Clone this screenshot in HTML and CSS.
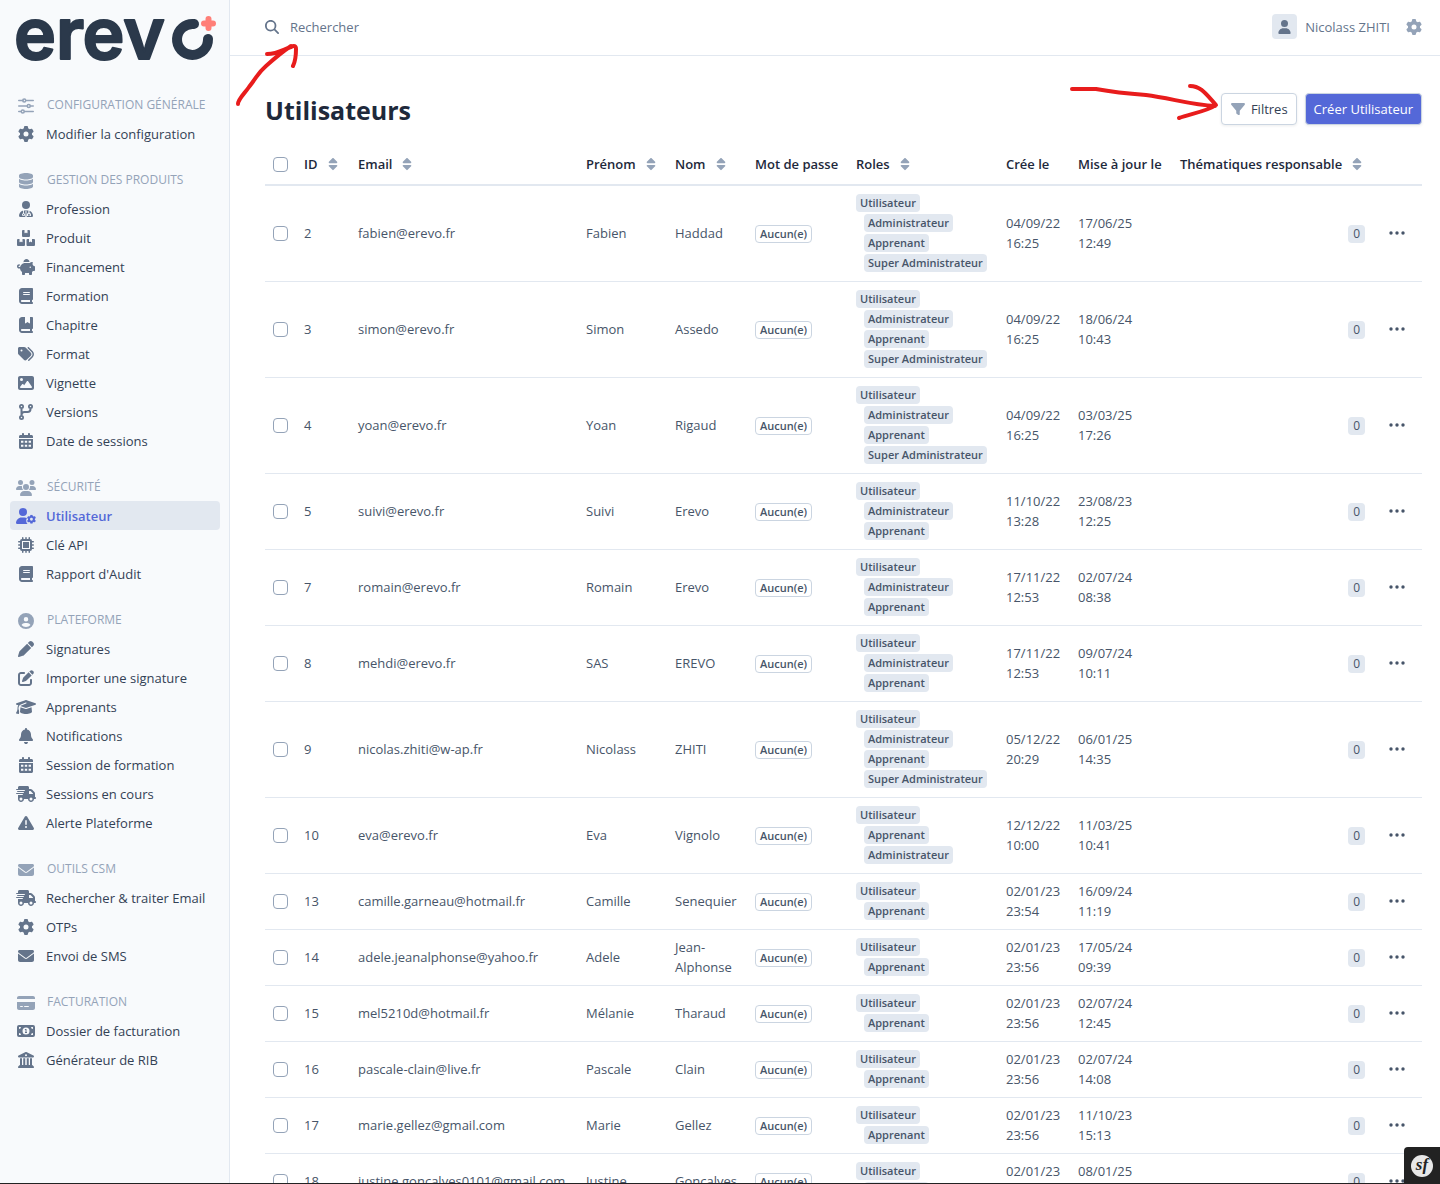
FILE: index.html
```html
<!DOCTYPE html>
<html lang="fr">
<head>
    <meta charset="UTF-8">
    <meta name="viewport" content="width=device-width, initial-scale=1.0">
    <title>Utilisateurs</title>
    <link rel="stylesheet" href="styles.css">
</head>
<body>
    <svg class="sprite" aria-hidden="true">
        <symbol id="sliders" viewBox="0 0 512 512"><g fill="none" stroke="currentColor" stroke-width="48" stroke-linecap="round"><path d="M24 80h136M272 80h216M24 256h264M400 256h88M24 432h72M208 432h280"/><circle cx="200" cy="80" r="48"/><circle cx="344" cy="256" r="48"/><circle cx="152" cy="432" r="48"/></g></symbol>
        <symbol id="gear" viewBox="0 0 512 512"><path d="M495.9 166.6c3.2 8.7 .5 18.4-6.4 24.6l-43.3 39.4c1.1 8.3 1.7 16.8 1.7 25.4s-.6 17.1-1.7 25.4l43.3 39.4c6.9 6.2 9.6 15.9 6.4 24.6c-4.4 11.9-9.7 23.3-15.8 34.3l-4.7 8.1c-6.6 11-14 21.4-22.1 31.2c-5.9 7.2-15.7 9.6-24.5 6.8l-55.7-17.7c-13.4 10.3-28.2 18.9-44 25.4l-12.5 57.1c-2 9.1-9 16.3-18.2 17.8c-13.8 2.3-28 3.5-42.5 3.5s-28.7-1.2-42.5-3.5c-9.2-1.5-16.2-8.7-18.2-17.8l-12.5-57.1c-15.8-6.5-30.6-15.1-44-25.4L83.1 425.9c-8.8 2.8-18.6 .3-24.5-6.8c-8.1-9.8-15.5-20.2-22.1-31.2l-4.7-8.1c-6.1-11-11.4-22.4-15.8-34.3c-3.2-8.7-.5-18.4 6.4-24.6l43.3-39.4C64.6 273.1 64 264.6 64 256s.6-17.1 1.7-25.4L22.4 191.2c-6.9-6.2-9.6-15.9-6.4-24.6c4.4-11.9 9.7-23.3 15.8-34.3l4.7-8.1c6.6-11 14-21.4 22.1-31.2c5.9-7.2 15.7-9.6 24.5-6.8l55.7 17.7c13.4-10.3 28.2-18.9 44-25.4l12.5-57.1c2-9.1 9-16.3 18.2-17.8C227.3 1.2 241.5 0 256 0s28.7 1.2 42.5 3.5c9.2 1.5 16.2 8.7 18.2 17.8l12.5 57.1c15.8 6.5 30.6 15.1 44 25.4l55.7-17.7c8.8-2.8 18.6-.3 24.5 6.8c8.1 9.8 15.5 20.2 22.1 31.2l4.7 8.1c6.1 11 11.4 22.4 15.8 34.3zM256 336a80 80 0 1 0 0-160 80 80 0 1 0 0 160z"/></symbol>
        <symbol id="database" viewBox="0 0 448 512"><path d="M448 80v48c0 44.2-100.3 80-224 80S0 172.2 0 128V80C0 35.8 100.3 0 224 0S448 35.8 448 80zM393.2 214.7c20.8-7.4 39.9-16.9 54.8-28.6V288c0 44.2-100.3 80-224 80S0 332.2 0 288V186.1c14.9 11.8 34 21.2 54.8 28.6C99.7 230.7 159.5 240 224 240s124.3-9.3 169.2-25.3zM0 346.1c14.9 11.8 34 21.2 54.8 28.6C99.7 390.7 159.5 400 224 400s124.3-9.3 169.2-25.3c20.8-7.4 39.9-16.9 54.8-28.6V432c0 44.2-100.3 80-224 80S0 476.2 0 432V346.1z"/></symbol>
        <symbol id="doctor" viewBox="0 0 448 512"><circle cx="224" cy="128" r="128"/><path fill-rule="evenodd" d="M112 312c-66 24-112 90-112 170c0 16 13 30 30 30H418c16 0 30-14 30-30c0-80-46-146-112-170v62c26 8 46 34 46 62v44h-48v-28h10v-16c0-22-10-32-26-32s-26 10-26 32v16h10v28h-48v-44c0-28 18-54 46-62v-70H160v86c20 6 34 24 34 46c0 26-22 46-48 46s-48-20-48-46c0-22 14-40 34-46v-78zM146 416a20 20 0 1 0 0 40 20 20 0 1 0 0-40zM200 330h48l-12 60 12 122h-48l12-122z"/></symbol>
        <symbol id="boxes" viewBox="0 0 576 512"><path d="M160 32a32 32 0 0 1 32-32h48v90c0 12 10 16 18 10l30-20 30 20c8 6 18 2 18-10V0h48a32 32 0 0 1 32 32v160a32 32 0 0 1-32 32H192a32 32 0 0 1-32-32zM0 320a32 32 0 0 1 32-32h48v90c0 12 10 16 18 10l30-20 30 20c8 6 18 2 18-10v-90h48a32 32 0 0 1 32 32v160a32 32 0 0 1-32 32H32a32 32 0 0 1-32-32zM304 320a32 32 0 0 1 32-32h48v90c0 12 10 16 18 10l30-20 30 20c8 6 18 2 18-10v-90h64a32 32 0 0 1 32 32v160a32 32 0 0 1-32 32H336a32 32 0 0 1-32-32z"/></symbol>
        <symbol id="piggy" viewBox="0 0 576 512"><path d="M400 96l0 .7c-5.3-.4-10.6-.7-16-.7H256c-16.5 0-32.5 2.1-47.8 6c-.1-2-.2-4-.2-6c0-53 43-96 96-96s96 43 96 96zm-16 32c3.5 0 7 .1 10.4 .3c4.2 .3 8.4 .7 12.6 1.3C424.6 109.1 450.8 96 480 96h11.5c10.4 0 18 9.8 15.5 19.9l-13.8 55.2c15.8 14.8 28.7 32.8 37.5 52.9H544c17.7 0 32 14.3 32 32v96c0 17.7-14.3 32-32 32H512c-9.1 12.1-19.9 22.9-32 32v64c0 17.7-14.3 32-32 32H416c-17.7 0-32-14.3-32-32V448H256v32c0 17.7-14.3 32-32 32H192c-17.7 0-32-14.3-32-32V416c-34.9-26.2-58.7-66.3-63.2-112H68c-37.6 0-68-30.4-68-68s30.4-68 68-68h4c13.3 0 24 10.7 24 24s-10.7 24-24 24H68c-11 0-20 9-20 20s9 20 20 20H99.2c12.1-59.8 57.7-107.5 116.3-122.8c12.9-3.4 26.5-5.2 40.5-5.2H384zm64 136a24 24 0 1 0 -48 0 24 24 0 1 0 48 0z"/></symbol>
        <symbol id="book" viewBox="0 0 448 512"><path d="M96 0C43 0 0 43 0 96V416c0 53 43 96 96 96H384h32c17.7 0 32-14.3 32-32s-14.3-32-32-32V384c17.7 0 32-14.3 32-32V32c0-17.7-14.3-32-32-32H384 96zm0 384H352v64H96c-17.7 0-32-14.3-32-32s14.3-32 32-32zm32-240c0-8.8 7.2-16 16-16H336c8.8 0 16 7.2 16 16s-7.2 16-16 16H144c-8.8 0-16-7.2-16-16zm16 48H336c8.8 0 16 7.2 16 16s-7.2 16-16 16H144c-8.8 0-16-7.2-16-16s7.2-16 16-16z"/></symbol>
        <symbol id="bookmark" viewBox="0 0 448 512"><path d="M0 96C0 43 43 0 96 0h96V190.7c0 13.4 15.5 20.9 26 12.5L272 160l54 43.2c10.5 8.4 26 .9 26-12.5V0h32 32c17.7 0 32 14.3 32 32V352c0 17.7-14.3 32-32 32v64c17.7 0 32 14.3 32 32s-14.3 32-32 32H384 96c-53 0-96-43-96-96V96zM64 416c0 17.7 14.3 32 32 32H352V384H96c-17.7 0-32 14.3-32 32z"/></symbol>
        <symbol id="tags" viewBox="0 0 512 512"><path d="M345 39.1L472.8 168.4c52.4 53 52.4 138.2 0 191.2L360.8 472.9c-9.3 9.4-24.5 9.5-33.9 .2s-9.5-24.5-.2-33.9L438.6 325.9c33.9-34.3 33.9-89.4 0-123.7L310.9 72.9c-9.3-9.4-9.2-24.6 .2-33.9s24.6-9.2 33.9 .2zM0 229.5V80C0 53.5 21.5 32 48 32H197.5c17 0 33.3 6.7 45.3 18.7l168 168c25 25 25 65.5 0 90.5L277.3 442.7c-25 25-65.5 25-90.5 0l-168-168C6.7 262.7 0 246.5 0 229.5zM144 144a32 32 0 1 0 -64 0 32 32 0 1 0 64 0z"/></symbol>
        <symbol id="image" viewBox="0 0 512 512"><path d="M0 96C0 60.7 28.7 32 64 32H448c35.3 0 64 28.7 64 64V416c0 35.3-28.7 64-64 64H64c-35.3 0-64-28.7-64-64V96zM323.8 202.5c-4.5-6.6-11.9-10.5-19.8-10.5s-15.4 3.9-19.8 10.5l-87 127.6L170.7 297c-4.6-5.7-11.5-9-18.7-9s-14.2 3.3-18.7 9l-64 80c-5.8 7.2-6.9 17.1-2.9 25.4s12.4 13.6 21.6 13.6h96 32H424c8.9 0 17.1-4.9 21.2-12.8s3.6-17.4-1.4-24.7l-120-176zM112 192a48 48 0 1 0 0-96 48 48 0 1 0 0 96z"/></symbol>
        <symbol id="branch" viewBox="0 0 448 512"><g fill="none" stroke="currentColor"><g stroke-width="56"><circle cx="80" cy="80" r="52"/><circle cx="368" cy="80" r="52"/><circle cx="80" cy="432" r="52"/></g><path stroke-width="64" d="M80 150v212M368 150v10c0 53-43 96-96 96H176c-53 0-96 43-96 96"/></g></symbol>
        <symbol id="calendar" viewBox="0 0 448 512"><path fill-rule="evenodd" d="M128 0c17.7 0 32 14.3 32 32V64H288V32c0-17.7 14.3-32 32-32s32 14.3 32 32V64h48c26.5 0 48 21.5 48 48v48H0V112C0 85.5 21.5 64 48 64H96V32c0-17.7 14.3-32 32-32zM0 192H448V464c0 26.5-21.5 48-48 48H48c-26.5 0-48-21.5-48-48V192zM64 248v60h76v-60zM186 248v60h76v-60zM308 248v60h76v-60zM64 376v60h76v-60zM186 376v60h76v-60zM308 376v60h76v-60z"/></symbol>
        <symbol id="users" viewBox="0 0 640 512"><path d="M144 0a80 80 0 1 1 0 160A80 80 0 1 1 144 0zM512 0a80 80 0 1 1 0 160A80 80 0 1 1 512 0zM0 298.7C0 239.8 47.8 192 106.7 192h42.7c15.9 0 31 3.5 44.6 9.7c-1.3 7.2-1.9 14.7-1.9 22.3c0 38.2 16.8 72.5 43.3 96c-.2 0-.4 0-.7 0H21.3C9.6 320 0 310.4 0 298.7zM405.3 320c-.2 0-.4 0-.7 0c26.6-23.5 43.3-57.8 43.3-96c0-7.6-.7-15-1.9-22.3c13.6-6.3 28.7-9.7 44.6-9.7h42.7C592.2 192 640 239.8 640 298.7c0 11.8-9.6 21.3-21.3 21.3H405.3zM224 224a96 96 0 1 1 192 0 96 96 0 1 1 -192 0zM128 485.3C128 411.7 187.7 352 261.3 352H378.7C452.3 352 512 411.7 512 485.3c0 14.7-11.9 26.7-26.7 26.7H154.7c-14.7 0-26.7-11.9-26.7-26.7z"/></symbol>
        <symbol id="usergear" viewBox="0 0 640 512"><path d="M224 256A128 128 0 1 0 224 0a128 128 0 1 0 0 256zm-45.7 48C79.8 304 0 383.8 0 482.3C0 498.7 13.3 512 29.7 512H370c-50-50-56-134-20-192c-24-10-52-16-80-16H178.3z"/><svg x="348" y="210" width="292" height="302" viewBox="0 0 512 512"><use href="#gear"/></svg></symbol>
        <symbol id="chip" viewBox="0 0 512 512"><path fill="none" stroke="currentColor" stroke-width="48" stroke-linecap="round" d="M152 24v60M256 24v60M360 24v60M152 488v-60M256 488v-60M360 488v-60M24 152h60M24 256h60M24 360h60M488 152h-60M488 256h-60M488 360h-60"/><path fill-rule="evenodd" d="M128 64h256a64 64 0 0 1 64 64v256a64 64 0 0 1-64 64H128a64 64 0 0 1-64-64V128a64 64 0 0 1 64-64zM128 128v256h256V128zM160 160h192v192H160z"/></symbol>
        <symbol id="circleuser" viewBox="0 0 512 512"><path d="M399 384.2C376.9 345.8 335.4 320 288 320H224c-47.4 0-88.9 25.8-111 64.2c35.2 39.2 86.2 63.8 143 63.8s107.8-24.7 143-63.8zM0 256a256 256 0 1 1 512 0A256 256 0 1 1 0 256zm256 16a72 72 0 1 0 0-144 72 72 0 1 0 0 144z"/></symbol>
        <symbol id="pen" viewBox="0 0 512 512"><path d="M362.7 19.3L314.3 67.7 444.3 197.7l48.4-48.4c25-25 25-65.5 0-90.5L453.3 19.3c-25-25-65.5-25-90.5 0zm-71 71L58.6 323.5c-10.4 10.4-18 23.3-22.2 37.4L1 481.2C-1.5 489.7 .8 498.8 7 505s15.3 8.5 23.7 6.1l120.3-35.4c14.1-4.2 27-11.8 37.4-22.2L421.7 220.3 291.7 90.3z"/></symbol>
        <symbol id="edit" viewBox="0 0 512 512"><path d="M471.6 21.7c-21.9-21.9-57.3-21.9-79.2 0L362.3 51.7l97.9 97.9 30.1-30.1c21.9-21.9 21.9-57.3 0-79.2L471.6 21.7zm-299.2 220c-6.1 6.1-10.8 13.6-13.5 21.9l-29.6 88.8c-2.9 8.6-.6 18.1 5.8 24.6s15.9 8.7 24.6 5.8l88.8-29.6c8.2-2.7 15.7-7.4 21.9-13.5L437.7 172.3 339.7 74.3 172.4 241.7zM96 64C43 64 0 107 0 160V416c0 53 43 96 96 96H352c53 0 96-43 96-96V320c0-17.7-14.3-32-32-32s-32 14.3-32 32v96c0 17.7-14.3 32-32 32H96c-17.7 0-32-14.3-32-32V160c0-17.7 14.3-32 32-32h96c17.7 0 32-14.3 32-32s-14.3-32-32-32H96z"/></symbol>
        <symbol id="cap" viewBox="0 0 640 512"><path d="M320 32c-8.1 0-16.1 1.4-23.7 4.1L15.8 137.4C6.3 140.9 0 149.9 0 160s6.3 19.1 15.8 22.6l57.9 20.9C57.3 229.3 48 259.8 48 291.9v28.1c0 28.4-10.8 57.7-22.3 80.8c-6.5 13-13.9 25.8-22.5 37.6C0 442.7-.9 448.3 .9 453.4s6 8.9 11.2 10.2l64 16c4.2 1.1 8.7 .3 12.4-2s6.3-6.1 7.1-10.4c8.6-42.8 4.3-81.2-2.1-108.7C90.3 344.3 86 329.8 80 316.5V291.9c0-30.2 10.2-58.7 27.9-81.5c12.9-15.5 29.6-28 49.2-35.7l157-61.7c8.2-3.2 17.5 .8 20.7 9s-.8 17.5-9 20.7l-157 61.7c-12.4 4.9-23.3 12.4-32.2 21.6l159.6 57.6c7.6 2.7 15.6 4.1 23.7 4.1s16.1-1.4 23.7-4.1L624.2 182.6c9.5-3.4 15.8-12.5 15.8-22.6s-6.3-19.1-15.8-22.6L343.7 36.1C336.1 33.4 328.1 32 320 32zM128 408c0 35.3 86 72 192 72s192-36.7 192-72L496.7 262.6 354.5 314c-11.1 4-22.8 6-34.5 6s-23.5-2-34.5-6L143.3 262.6 128 408z"/></symbol>
        <symbol id="bell" viewBox="0 0 448 512"><path d="M224 0c-17.7 0-32 14.3-32 32V51.2C119 66 64 130.6 64 208v18.8c0 47-17.3 92.4-48.5 127.6l-7.4 8.3c-8.4 9.4-10.4 22.9-5.3 34.4S19.4 416 32 416H416c12.6 0 24-7.4 29.2-18.9s3.1-25-5.3-34.4l-7.4-8.3C401.3 319.2 384 273.9 384 226.8V208c0-77.4-55-142-128-156.8V32c0-17.7-14.3-32-32-32zm45.3 493.3c12-12 18.7-28.3 18.7-45.3H224 160c0 17 6.7 33.3 18.7 45.3s28.3 18.7 45.3 18.7s33.3-6.7 45.3-18.7z"/></symbol>
        <symbol id="truck" viewBox="0 0 640 512"><path d="M112 0C85.5 0 64 21.5 64 48V96H16c-8.8 0-16 7.2-16 16s7.2 16 16 16H64 272c8.8 0 16 7.2 16 16s-7.2 16-16 16H64 48c-8.8 0-16 7.2-16 16s7.2 16 16 16H64 240c8.8 0 16 7.2 16 16s-7.2 16-16 16H64 16c-8.8 0-16 7.2-16 16s7.2 16 16 16H64 208c8.8 0 16 7.2 16 16s-7.2 16-16 16H64V416c0 53 43 96 96 96s96-43 96-96H384c0 53 43 96 96 96s96-43 96-96h32c17.7 0 32-14.3 32-32s-14.3-32-32-32V288 256 237.3c0-17-6.7-33.3-18.7-45.3L512 114.7c-12-12-28.3-18.7-45.3-18.7H416V48c0-26.5-21.5-48-48-48H112zM544 237.3V256H416V160h50.7L544 237.3zM160 368a48 48 0 1 1 0 96 48 48 0 1 1 0-96zm272 48a48 48 0 1 1 96 0 48 48 0 1 1 -96 0z"/></symbol>
        <symbol id="warning" viewBox="0 0 512 512"><path d="M256 32c14.2 0 27.3 7.5 34.5 19.8l216 368c7.3 12.4 7.3 27.7 .2 40.1S486.3 480 472 480H40c-14.3 0-27.6-7.7-34.7-20.1s-7-27.8 .2-40.1l216-368C228.7 39.5 241.8 32 256 32zm0 128c-13.3 0-24 10.7-24 24V296c0 13.3 10.7 24 24 24s24-10.7 24-24V184c0-13.3-10.7-24-24-24zm32 224a32 32 0 1 0 -64 0 32 32 0 1 0 64 0z"/></symbol>
        <symbol id="envelope" viewBox="0 0 512 512"><path d="M48 64C21.5 64 0 85.5 0 112c0 15.1 7.1 29.3 19.2 38.4L236.8 313.6c11.4 8.5 27 8.5 38.4 0L492.8 150.4c12.1-9.1 19.2-23.3 19.2-38.4c0-26.5-21.5-48-48-48H48zM0 176V384c0 35.3 28.7 64 64 64H448c35.3 0 64-28.7 64-64V176L294.4 339.2c-22.8 17.1-54 17.1-76.8 0L0 176z"/></symbol>
        <symbol id="card" viewBox="0 0 576 512"><path d="M64 32C28.7 32 0 60.7 0 96v32H576V96c0-35.3-28.7-64-64-64H64zM576 224H0V416c0 35.3 28.7 64 64 64H512c35.3 0 64-28.7 64-64V224zM112 352h64c8.8 0 16 7.2 16 16s-7.2 16-16 16H112c-8.8 0-16-7.2-16-16s7.2-16 16-16zm112 16c0-8.8 7.2-16 16-16H368c8.8 0 16 7.2 16 16s-7.2 16-16 16H240c-8.8 0-16-7.2-16-16z"/></symbol>
        <symbol id="money" viewBox="0 0 576 512"><path fill-rule="evenodd" d="M64 64h448a64 64 0 0 1 64 64v256a64 64 0 0 1-64 64H64a64 64 0 0 1-64-64V128a64 64 0 0 1 64-64zM64 128v64a64 64 0 0 0 64-64zM448 128a64 64 0 0 0 64 64v-64zM64 320v64h64a64 64 0 0 0-64-64zM512 320a64 64 0 0 0-64 64h64zM288 144a112 112 0 1 0 0 224 112 112 0 1 0 0-224zM252 192h52v96h16v32h-64v-32h16v-64h-20z"/></symbol>
        <symbol id="bank" viewBox="0 0 512 512"><path fill-rule="evenodd" d="M244 3c8-4 17-4 25 0l224 112c14 7 21 20 18 34s-16 27-31 27H32c-15 0-28-12-31-27s4-29 18-34zM256 72a32 32 0 1 0 0 64 32 32 0 1 0 0-64zM64 200h64v216h40V200h64v216h48V200h64v216h40V200h64v216c22 14 34 24 50 38c14 12 16 26 12 38s-17 20-30 20H32c-13 0-26-8-30-20s-2-26 12-38c16-14 28-24 50-38z"/></symbol>
        <symbol id="search" viewBox="0 0 512 512"><path d="M416 208c0 45.9-14.9 88.3-40 122.7L502.6 457.4c12.5 12.5 12.5 32.8 0 45.3s-32.8 12.5-45.3 0L330.7 376c-34.4 25.2-76.8 40-122.7 40C93.1 416 0 322.9 0 208S93.1 0 208 0S416 93.1 416 208zM208 352a144 144 0 1 0 0-288 144 144 0 1 0 0 288z"/></symbol>
        <symbol id="user" viewBox="0 0 448 512"><path d="M224 256A128 128 0 1 0 224 0a128 128 0 1 0 0 256zm-45.7 48C79.8 304 0 383.8 0 482.3C0 498.7 13.3 512 29.7 512H418.3c16.4 0 29.7-13.3 29.7-29.7C448 383.8 368.2 304 269.7 304H178.3z"/></symbol>
        <symbol id="filter" viewBox="0 0 512 512"><path d="M3.9 54.9C10.5 40.9 24.5 32 40 32H472c15.5 0 29.5 8.9 36.1 22.9s4.6 30.5-5.2 42.5L320 320.9V448c0 12.1-6.8 23.2-17.7 28.6s-23.8 4.3-33.5-3l-64-48c-8.1-6-12.8-15.5-12.8-25.6V320.9L9 97.3C-.7 85.4-2.8 68.8 3.9 54.9z"/></symbol>
        <symbol id="sort" viewBox="0 0 320 512"><path d="M137.4 41.4c12.5-12.5 32.8-12.5 45.3 0l128 128c9.2 9.2 11.9 22.9 6.9 34.9s-16.6 19.8-29.6 19.8H32c-12.9 0-24.6-7.8-29.6-19.8s-2.2-25.7 6.9-34.9l128-128zm0 429.3l-128-128c-9.2-9.2-11.9-22.9-6.9-34.9s16.6-19.8 29.6-19.8H288c12.9 0 24.6 7.8 29.6 19.8s2.2 25.7-6.9 34.9l-128 128c-12.5 12.5-32.8 12.5-45.3 0z"/></symbol>
        <symbol id="dots" viewBox="0 0 16 16"><circle cx="2" cy="8" r="1.700"/><circle cx="8" cy="8" r="1.700"/><circle cx="14" cy="8" r="1.700"/></symbol>
    </svg>

    <div class="layout">
        <aside class="sidebar">
            <a href="#" class="logo" aria-label="erevo">
                <svg width="200" height="46" viewBox="0 0 200 46">
                    <text class="logo-text" x="-2" y="44">erev</text>
                    <path class="logo-ring" d="M178 9A15.500 15.500 0 1 0 192 24"/>
                    <path class="logo-plus" d="M192.500 4v9M188 8.500h9"/>
                </svg>
            </a>
            <nav class="menu">
                <h2 class="menu-title"><svg class="icon"><use href="#sliders"/></svg><span>Configuration générale</span></h2>
                <ul>
                    <li><a href="#"><svg class="icon"><use href="#gear"/></svg>Modifier la configuration</a></li>
                </ul>
                <h2 class="menu-title"><svg class="icon"><use href="#database"/></svg><span>Gestion des produits</span></h2>
                <ul>
                    <li><a href="#"><svg class="icon"><use href="#doctor"/></svg>Profession</a></li>
                    <li><a href="#"><svg class="icon"><use href="#boxes"/></svg>Produit</a></li>
                    <li><a href="#"><svg class="icon"><use href="#piggy"/></svg>Financement</a></li>
                    <li><a href="#"><svg class="icon"><use href="#book"/></svg>Formation</a></li>
                    <li><a href="#"><svg class="icon"><use href="#bookmark"/></svg>Chapitre</a></li>
                    <li><a href="#"><svg class="icon"><use href="#tags"/></svg>Format</a></li>
                    <li><a href="#"><svg class="icon"><use href="#image"/></svg>Vignette</a></li>
                    <li><a href="#"><svg class="icon"><use href="#branch"/></svg>Versions</a></li>
                    <li><a href="#"><svg class="icon"><use href="#calendar"/></svg>Date de sessions</a></li>
                </ul>
                <h2 class="menu-title"><svg class="icon"><use href="#users"/></svg><span>Sécurité</span></h2>
                <ul>
                    <li><a href="#" class="active"><svg class="icon"><use href="#usergear"/></svg>Utilisateur</a></li>
                    <li><a href="#"><svg class="icon"><use href="#chip"/></svg>Clé API</a></li>
                    <li><a href="#"><svg class="icon"><use href="#book"/></svg>Rapport d'Audit</a></li>
                </ul>
                <h2 class="menu-title"><svg class="icon"><use href="#circleuser"/></svg><span>Plateforme</span></h2>
                <ul>
                    <li><a href="#"><svg class="icon"><use href="#pen"/></svg>Signatures</a></li>
                    <li><a href="#"><svg class="icon"><use href="#edit"/></svg>Importer une signature</a></li>
                    <li><a href="#"><svg class="icon"><use href="#cap"/></svg>Apprenants</a></li>
                    <li><a href="#"><svg class="icon"><use href="#bell"/></svg>Notifications</a></li>
                    <li><a href="#"><svg class="icon"><use href="#calendar"/></svg>Session de formation</a></li>
                    <li><a href="#"><svg class="icon"><use href="#truck"/></svg>Sessions en cours</a></li>
                    <li><a href="#"><svg class="icon"><use href="#warning"/></svg>Alerte Plateforme</a></li>
                </ul>
                <h2 class="menu-title"><svg class="icon"><use href="#envelope"/></svg><span>Outils CSM</span></h2>
                <ul>
                    <li><a href="#"><svg class="icon"><use href="#truck"/></svg>Rechercher &amp; traiter Email</a></li>
                    <li><a href="#"><svg class="icon"><use href="#gear"/></svg>OTPs</a></li>
                    <li><a href="#"><svg class="icon"><use href="#envelope"/></svg>Envoi de SMS</a></li>
                </ul>
                <h2 class="menu-title"><svg class="icon"><use href="#card"/></svg><span>Facturation</span></h2>
                <ul>
                    <li><a href="#"><svg class="icon"><use href="#money"/></svg>Dossier de facturation</a></li>
                    <li><a href="#"><svg class="icon"><use href="#bank"/></svg>Générateur de RIB</a></li>
                </ul>
            </nav>
        </aside>

        <div class="content">
            <header class="topbar">
                <form class="search">
                    <label for="query"><svg class="search-icon"><use href="#search"/></svg></label>
                    <input type="search" id="query" placeholder="Rechercher" aria-label="Rechercher">
                </form>
                <div class="account">
                    <span class="avatar"><svg><use href="#user"/></svg></span>
                    <span class="account-name">Nicolass ZHITI</span>
                    <button type="button" class="settings" aria-label="Paramètres"><svg class="icon"><use href="#gear"/></svg></button>
                </div>
                <svg class="arrow arrow-search" width="70" height="70" viewBox="0 0 70 70"><path d="M8 64C8 59 15 53 19 47C29 34 28 33 36 26C46 17 52 12 61 6M37 14C48 14 54 9 61 7C64 5 66 6 66 9C66 15 66 20 63 26"/></svg>
            </header>

            <main class="main">
                <div class="page-head">
                    <h1>Utilisateurs</h1>
                    <div class="actions">
                        <button type="button" class="btn"><svg class="filter-icon"><use href="#filter"/></svg>Filtres</button>
                        <button type="button" class="btn btn-primary">Créer Utilisateur</button>
                        <svg class="arrow arrow-filter" width="156" height="44" viewBox="0 0 156 44"><path d="M6 9H30C46 12 66 14 80 15C104 18 126 25 149 26M124 6C135 6 140 14 150 25C142 31 124 34 113 38"/></svg>
                    </div>
                </div>

                <table class="users">
                    <colgroup>
                        <col class="col-check"><col class="col-id"><col class="col-email"><col class="col-first"><col class="col-last"><col class="col-pass"><col class="col-roles"><col class="col-created"><col class="col-updated"><col class="col-themes"><col class="col-actions">
                    </colgroup>
                    <thead>
                        <tr>
                            <th><input type="checkbox" aria-label="Tout sélectionner"></th>
                            <th><a href="#">ID<svg><use href="#sort"/></svg></a></th>
                            <th><a href="#">Email<svg><use href="#sort"/></svg></a></th>
                            <th><a href="#">Prénom<svg><use href="#sort"/></svg></a></th>
                            <th><a href="#">Nom<svg><use href="#sort"/></svg></a></th>
                            <th>Mot de passe</th>
                            <th><a href="#">Roles<svg><use href="#sort"/></svg></a></th>
                            <th>Crée le</th>
                            <th>Mise à jour le</th>
                            <th><a href="#">Thématiques responsable<svg><use href="#sort"/></svg></a></th>
                            <th></th>
                        </tr>
                    </thead>
                    <tbody id="rows"></tbody>
                </table>
            </main>
        </div>
    </div>

    <div class="toolbar"><button type="button" class="toolbar-btn"><span>sf</span></button></div>

    <script>
        const U = 'Utilisateur', A = 'Administrateur', P = 'Apprenant', S = 'Super Administrateur';

        const users = [
            [2, 'fabien@erevo.fr', 'Fabien', 'Haddad', [U, A, P, S], '04/09/22 16:25', '17/06/25 12:49'],
            [3, 'simon@erevo.fr', 'Simon', 'Assedo', [U, A, P, S], '04/09/22 16:25', '18/06/24 10:43'],
            [4, 'yoan@erevo.fr', 'Yoan', 'Rigaud', [U, A, P, S], '04/09/22 16:25', '03/03/25 17:26'],
            [5, 'suivi@erevo.fr', 'Suivi', 'Erevo', [U, A, P], '11/10/22 13:28', '23/08/23 12:25'],
            [7, 'romain@erevo.fr', 'Romain', 'Erevo', [U, A, P], '17/11/22 12:53', '02/07/24 08:38'],
            [8, 'mehdi@erevo.fr', 'SAS', 'EREVO', [U, A, P], '17/11/22 12:53', '09/07/24 10:11'],
            [9, 'nicolas.zhiti@w-ap.fr', 'Nicolass', 'ZHITI', [U, A, P, S], '05/12/22 20:29', '06/01/25 14:35'],
            [10, 'eva@erevo.fr', 'Eva', 'Vignolo', [U, P, A], '12/12/22 10:00', '11/03/25 10:41'],
            [13, 'camille.garneau@hotmail.fr', 'Camille', 'Senequier', [U, P], '02/01/23 23:54', '16/09/24 11:19'],
            [14, 'adele.jeanalphonse@yahoo.fr', 'Adele', 'Jean-Alphonse', [U, P], '02/01/23 23:56', '17/05/24 09:39'],
            [15, 'mel5210d@hotmail.fr', 'Mélanie', 'Tharaud', [U, P], '02/01/23 23:56', '02/07/24 12:45'],
            [16, 'pascale-clain@live.fr', 'Pascale', 'Clain', [U, P], '02/01/23 23:56', '02/07/24 14:08'],
            [17, 'marie.gellez@gmail.com', 'Marie', 'Gellez', [U, P], '02/01/23 23:56', '11/10/23 15:13'],
            [18, 'justine.goncalves0101@gmail.com', 'Justine', 'Goncalves', [U, P], '02/01/23 23:56', '08/01/25 10:22']
        ];

        document.getElementById('rows').innerHTML = users.map(([id, email, first, last, roles, created, updated]) => `
            <tr>
                <td><input type="checkbox" aria-label="Sélectionner ${id}"></td>
                <td>${id}</td>
                <td>${email}</td>
                <td>${first}</td>
                <td>${last}</td>
                <td><span class="badge badge-outline">Aucun(e)</span></td>
                <td><ul class="roles">${roles.map(role => `<li><span class="badge">${role}</span></li>`).join('')}</ul></td>
                <td>${created}</td>
                <td>${updated}</td>
                <td class="count"><span class="badge badge-count">0</span></td>
                <td class="row-actions"><button type="button" class="more" aria-label="Actions"><svg class="icon"><use href="#dots"/></svg></button></td>
            </tr>`).join('');
    </script>
</body>
</html>
```

FILE: styles.css
```css
* { box-sizing: border-box; }

body {
    margin: 0;
    font-family: "Open Sans", "Noto Sans", sans-serif;
    font-size: 13px;
    line-height: 20px;
    color: #475569;
    background: #fff;
}
ul { list-style: none; margin: 0; padding: 0; }
a { color: inherit; text-decoration: none; }
button, input { font: inherit; color: inherit; }
button { cursor: pointer; }
svg { fill: currentColor; flex-shrink: 0; }
.sprite { display: none; }
.icon { width: 20px; height: 16px; }

.layout { display: flex; height: 100vh; overflow: hidden; }

/* sidebar */
.sidebar {
    width: 230px;
    flex-shrink: 0;
    padding: 15px 9px 0 10px;
    background: #f8fafc;
    border-right: 1px solid #e2e8f0;
}
.logo { display: block; height: 58px; padding-left: 6px; }
.logo svg { overflow: visible; }
.logo-text {
    font-family: Inter, sans-serif;
    font-size: 71px;
    font-weight: 600;
    fill: #2b394b;
    stroke: #2b394b;
    stroke-width: 2px;
    stroke-linejoin: round;
}
.logo-ring { fill: none; stroke: #2b394b; stroke-width: 10px; stroke-linecap: round; }
.logo-plus { fill: none; stroke: #ff7f78; stroke-width: 6px; stroke-linecap: round; }

.menu-title {
    display: flex;
    align-items: center;
    gap: 11px;
    height: 30px;
    margin: 16px 0 0;
    padding: 4px 6px 0;
    font-size: 12px;
    font-weight: 500;
    text-transform: uppercase;
    color: #94a3b8;
}
.menu-title span { padding-bottom: 2px; }
.menu a {
    display: flex;
    align-items: center;
    gap: 10px;
    height: 29px;
    padding: 0 6px;
    border-radius: 4px;
    color: #334155;
}
.menu a .icon { color: #64748b; }
.menu .active { background: #e2e8f0; color: #5468d8; font-weight: 600; }
.menu .active .icon { color: #5468d8; }

/* top bar */
.content { flex: 1; min-width: 0; display: flex; flex-direction: column; }
.topbar {
    position: relative;
    display: flex;
    align-items: center;
    justify-content: space-between;
    height: 56px;
    flex-shrink: 0;
    padding: 0 18px 2px 35px;
    border-bottom: 1px solid #e2e8f0;
    color: #64748b;
}
.search { display: flex; align-items: center; gap: 9px; flex: 1; }
.search label { display: flex; }
.search-icon { width: 14px; height: 14px; }
.search input { flex: 1; border: 0; outline: 0; background: none; padding: 1px 2px; }
.search input::placeholder { color: #64748b; opacity: 1; }
.account { display: flex; align-items: center; gap: 8px; }
.avatar {
    display: flex;
    align-items: center;
    justify-content: center;
    width: 25px;
    height: 25px;
    border-radius: 4px;
    background: #e2e8f0;
}
.avatar svg { width: 13px; height: 14px; }
.settings { display: flex; margin-left: 8px; padding: 0; border: 0; background: none; color: #94a3b8; }
.settings .icon { width: 16px; }

/* page */
.main {
    flex: 1;
    min-height: 0;
    padding: 37px 18px 0 35px;
    overflow-y: auto;
    scrollbar-width: none;
}
.page-head { display: flex; align-items: center; justify-content: space-between; height: 32px; }
h1 { margin: 0; padding-top: 2px; font-size: 25px; line-height: 32px; font-weight: 700; color: #1e293b; }
.actions { position: relative; display: flex; gap: 8px; }
.btn {
    display: flex;
    align-items: center;
    gap: 5px;
    height: 32px;
    padding: 0 8px;
    border: 1px solid #cbd5e1;
    border-radius: 4px;
    background: #fff;
    color: #334155;
    box-shadow: 0 1px 3px rgba(15, 23, 42, 0.08);
}
.btn-primary { background: #5468d8; color: #fff; font-weight: 500; }
.filter-icon { width: 16px; height: 14px; color: #94a3b8; }

/* red hand-drawn arrows */
.arrow { position: absolute; pointer-events: none; }
.arrow path { fill: none; stroke: #e81c1c; stroke-width: 4px; stroke-linecap: round; stroke-linejoin: round; }
.arrow-search { left: 0; top: 40px; }
.arrow-filter { right: 200px; top: -13px; }

/* table */
.users { width: 100%; margin-top: 19px; table-layout: fixed; border-collapse: collapse; }
.col-check { width: 31px; }
.col-id { width: 54px; }
.col-first { width: 89px; }
.col-last { width: 80px; }
.col-pass { width: 101px; }
.col-roles { width: 150px; }
.col-created { width: 72px; }
.col-updated { width: 102px; }
.col-themes { width: 201px; }
.col-actions { width: 49px; }
.users th {
    height: 41px;
    padding: 0 8px;
    text-align: left;
    font-weight: 600;
    white-space: nowrap;
    color: #1e293b;
    border-bottom: 2px solid #e2e8f0;
}
.users th a { display: inline-flex; align-items: center; gap: 10px; }
.users th svg { width: 10px; height: 14px; color: #94a3b8; }
.users td { padding: 7px 8px 8px; border-bottom: 1px solid #e2e8f0; }
.users input {
    display: block;
    appearance: none;
    width: 15px;
    height: 15px;
    margin: 0;
    border: 1px solid #94a3b8;
    border-radius: 4px;
    background: #fff;
}
.users input:checked { background: #5468d8; }
.roles li { display: flex; height: 20px; align-items: center; }
.roles li + li { padding-left: 8px; }
.badge {
    display: inline-block;
    padding: 0 4px;
    border-radius: 4px;
    background: #e2e8f0;
    color: #475569;
    font-size: 11px;
    line-height: 18px;
    font-weight: 600;
    white-space: nowrap;
}
.badge-outline { border: 1px solid #cbd5e1; background: #fff; line-height: 16px; }
.badge-count { padding: 0 5px; font-size: 12px; font-weight: 500; }
.users .count { text-align: right; }
.users .row-actions { padding-left: 16px; }
.more { display: flex; padding: 0; border: 0; background: none; }
.more .icon { width: 16px; }

/* debug toolbar */
.toolbar { position: fixed; left: 0; right: 0; bottom: 0; height: 1px; background: #222; }
.toolbar-btn {
    position: absolute;
    right: 0;
    bottom: 0;
    display: flex;
    align-items: center;
    justify-content: center;
    width: 36px;
    height: 37px;
    padding: 0;
    border: 0;
    border-radius: 4px 0 0 0;
    background: #222;
}
.toolbar-btn span {
    width: 22px;
    height: 22px;
    border-radius: 50%;
    background: #e8e8e8;
    color: #222;
    font: italic bold 17px/20px "Liberation Serif", serif;
}
```
